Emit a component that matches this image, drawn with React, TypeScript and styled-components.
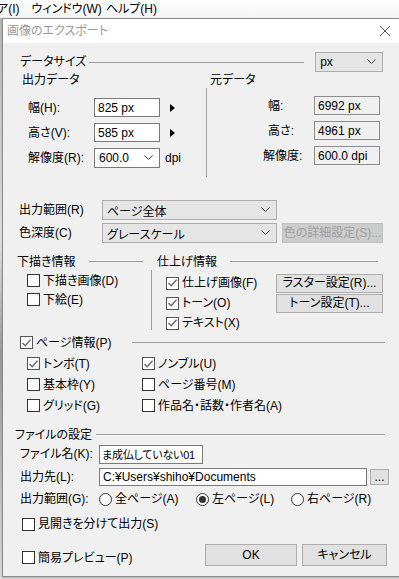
import React from 'react';
import styled, { createGlobalStyle } from 'styled-components';

const GlobalStyle = createGlobalStyle`
  html, body {
    margin: 0;
    padding: 0;
    background: #dcdcdc;
  }
  body {
    font-family: "Liberation Sans", "Noto Sans CJK JP", sans-serif;
    font-size: 12px;
    font-feature-settings: "palt";
    color: #000;
  }
`;

const Screen = styled.div`
  width: 399px;
  height: 579px;
  overflow: hidden;
  display: flex;
  flex-direction: column;
  background: #dcdcdc;
`;

const MenuStrip = styled.div`
  height: 18px;
  flex: none;
  display: flex;
  align-items: center;
  background: linear-gradient(#ffffff, #f4f4f4);
  white-space: nowrap;
`;

const MenuItem = styled.span<{ $x: number }>`
  margin-left: ${(p) => p.$x}px;
  line-height: 14px;
`;

const MainRow = styled.div`
  flex: 1;
  display: flex;
`;

const BackStrip = styled.div`
  width: 2px;
  flex: none;
  background: linear-gradient(#b9b9b9, #e3e3e3 40%, #9c9c9c 60%, #dddddd);
`;

const Dialog = styled.div`
  width: 400px;
  height: 557px;
  flex: none;
  border: 1px solid #8a8a8a;
  display: flex;
  flex-direction: column;
  box-shadow: 0 1px 2px rgba(0, 0, 0, 0.2);
`;

const TitleBar = styled.div`
  height: 24px;
  flex: none;
  background: #fff;
  display: flex;
  align-items: center;
  padding-left: 4px;
`;

const Title = styled.span`
  color: #9a9a9a;
  flex: 1;
  line-height: 14px;
`;

const CloseBox = styled.span`
  width: 12px;
  height: 12px;
  margin-right: 12px;
  display: flex;
`;

const Body = styled.div`
  flex: 1;
  background: #f0f0f0;
  padding-top: 9px;
  display: flex;
  flex-direction: column;
`;

const Row = styled.div<{ $h: number; $mt?: number; $ml?: number }>`
  height: ${(p) => p.$h}px;
  margin-top: ${(p) => p.$mt ?? 0}px;
  padding-left: ${(p) => p.$ml ?? 0}px;
  display: flex;
  align-items: center;
  flex: none;
  white-space: nowrap;
`;

const Text = styled.span<{ $w?: number; $ml?: number }>`
  line-height: 14px;
  ${(p) => (p.$w ? `width: ${p.$w}px; flex: none;` : '')}
  ${(p) => (p.$ml ? `margin-left: ${p.$ml}px;` : '')}
`;

const Rule = styled.div<{ $ml: number; $w?: number }>`
  margin-left: ${(p) => p.$ml}px;
  height: 0;
  border-top: 1px solid #a0a0a0;
  ${(p) => (p.$w ? `width: ${p.$w}px; flex: none;` : 'flex: 1;')}
`;

const TextBox = styled.div<{ $w: number; $h?: number; $ml?: number; $ro?: boolean; $tight?: boolean }>`
  width: ${(p) => p.$w}px;
  height: ${(p) => p.$h ?? 19}px;
  margin-left: ${(p) => p.$ml ?? 0}px;
  box-sizing: border-box;
  flex: none;
  border: 1px solid ${(p) => (p.$ro ? '#8c8c8c' : '#7a7a7a')};
  background: ${(p) => (p.$ro ? '#f0f0f0' : '#fff')};
  padding-left: ${(p) => (p.$tight ? 2 : 3)}px;
  font-size: ${(p) => (p.$tight ? 11 : 12)}px;
  letter-spacing: ${(p) => (p.$tight ? '-0.2px' : 'normal')};
  display: flex;
  align-items: center;
  overflow: hidden;
`;

const Select = styled.div<{ $w: number; $ml?: number; $edit?: boolean }>`
  width: ${(p) => p.$w}px;
  height: 20px;
  margin-left: ${(p) => p.$ml ?? 0}px;
  box-sizing: border-box;
  flex: none;
  border: 1px solid ${(p) => (p.$edit ? '#7a7a7a' : '#adadad')};
  background: ${(p) => (p.$edit ? '#fff' : '#e5e5e5')};
  padding: 0 6px 0 4px;
  display: flex;
  align-items: center;
  justify-content: space-between;
`;

const Button = styled.div<{ $w: number; $h?: number; $ml?: number; $disabled?: boolean }>`
  width: ${(p) => p.$w}px;
  height: ${(p) => p.$h ?? 19}px;
  margin-left: ${(p) => p.$ml ?? 0}px;
  box-sizing: border-box;
  flex: none;
  border: 1px solid ${(p) => (p.$disabled ? '#bfbfbf' : '#adadad')};
  background: ${(p) => (p.$disabled ? '#cccccc' : '#e1e1e1')};
  color: ${(p) => (p.$disabled ? '#a0a0a0' : '#000')};
  display: flex;
  align-items: center;
  justify-content: center;
  line-height: 14px;
`;

const Arrow = styled.span`
  margin-left: 10px;
  width: 0;
  height: 0;
  border-top: 4px solid transparent;
  border-bottom: 4px solid transparent;
  border-left: 5px solid #000;
`;

const Cols = styled.div`
  height: 86px;
  display: flex;
  flex: none;
`;

const LeftCol = styled.div`
  width: 178px;
  padding: 8px 0 0 25px;
  flex: none;
`;

const RightCol = styled.div`
  margin-top: 1px;
  height: 84px;
  border-left: 1px solid #a0a0a0;
  padding: 5px 0 0 61px;
`;

const Groups = styled.div`
  height: 80px;
  margin-top: 11px;
  display: flex;
  flex: none;
`;

const GroupCol = styled.div<{ $w?: number; $ml: number }>`
  margin-left: ${(p) => p.$ml}px;
  ${(p) => (p.$w ? `width: ${p.$w}px; flex: none;` : 'flex: 1;')}
  display: flex;
  flex-direction: column;
`;

const Etched = styled.div`
  margin-top: 1px;
  height: 57px;
  border-left: 1px solid #a0a0a0;
  padding: 3px 0 0 14px;
`;

const CheckGrid = styled.div`
  margin: 2px 0 0 24px;
  display: grid;
  grid-template-columns: 115px auto;
  grid-auto-rows: 21px;
  align-items: center;
  flex: none;
`;

const CheckItem = styled.label<{ $w?: number; $dy?: number }>`
  display: flex;
  align-items: center;
  gap: 3px;
  white-space: nowrap;
  ${(p) => (p.$w ? `width: ${p.$w}px; flex: none;` : '')}
  ${(p) => (p.$dy ? `margin-top: ${p.$dy}px;` : '')}
`;

const Box = styled.span<{ $on?: boolean }>`
  width: 13px;
  height: 13px;
  box-sizing: border-box;
  border: 1px solid ${(p) => (p.$on ? '#555' : '#333')};
  background: #fff;
  flex: none;
  display: flex;
  align-items: center;
  justify-content: center;
`;

const Radio = styled.span<{ $on?: boolean }>`
  width: 13px;
  height: 13px;
  box-sizing: border-box;
  border-radius: 50%;
  border: 1px solid #333;
  background: #fff;
  flex: none;
  display: flex;
  align-items: center;
  justify-content: center;
  &::after {
    content: '';
    width: 7px;
    height: 7px;
    border-radius: 50%;
    background: ${(p) => (p.$on ? '#333' : 'transparent')};
  }
`;

const RadioItem = styled.label<{ $w: number }>`
  width: ${(p) => p.$w}px;
  flex: none;
  display: flex;
  align-items: center;
  gap: 3px;
`;

const Chevron = () => (
  <svg width="9" height="6" viewBox="0 0 9 6">
    <polyline points="0.5,0.5 4.5,4.5 8.5,0.5" fill="none" stroke="#444" strokeWidth="1" />
  </svg>
);

const Check: React.FC<{ label: string; on?: boolean; w?: number; dy?: number }> = ({ label, on, w, dy }) => (
  <CheckItem $w={w} $dy={dy}>
    <Box $on={on}>
      {on && (
        <svg width="9" height="8" viewBox="0 0 9 8">
          <polyline points="0.5,4 3.2,6.8 8.5,0.8" fill="none" stroke="#666" strokeWidth="1.3" />
        </svg>
      )}
    </Box>
    <Text>{label}</Text>
  </CheckItem>
);

export default function App() {
  return (
    <Screen>
      <GlobalStyle />
      <MenuStrip>
        <MenuItem $x={-3}>ア(I)</MenuItem>
        <MenuItem $x={12}>ウィンドウ(W)</MenuItem>
        <MenuItem $x={4}>ヘルプ(H)</MenuItem>
      </MenuStrip>
      <MainRow>
        <BackStrip />
        <Dialog>
          <TitleBar>
            <Title>画像のエクスポート</Title>
            <CloseBox>
              <svg width="12" height="12" viewBox="0 0 12 12">
                <path d="M1 1 L11 11 M11 1 L1 11" stroke="#555" strokeWidth="1" />
              </svg>
            </CloseBox>
          </TitleBar>
          <Body>
            <Row $h={20} $ml={17}>
              <Text>データサイズ</Text>
              <Rule $ml={3} $w={215} />
              <Select $w={68} $ml={11}>
                <span>px</span>
                <Chevron />
              </Select>
            </Row>
            <Row $h={15} $ml={19}>
              <Text $w={188}>出力データ</Text>
              <Text>元データ</Text>
            </Row>
            <Cols>
              <LeftCol>
                <Row $h={25}>
                  <Text $w={66}>幅(H):</Text>
                  <TextBox $w={66}>825 px</TextBox>
                  <Arrow />
                </Row>
                <Row $h={25}>
                  <Text $w={66}>高さ(V):</Text>
                  <TextBox $w={66}>585 px</TextBox>
                  <Arrow />
                </Row>
                <Row $h={25}>
                  <Text $w={66}>解像度(R):</Text>
                  <Select $w={66} $edit>
                    <span>600.0</span>
                    <Chevron />
                  </Select>
                  <Text $ml={5}>dpi</Text>
                </Row>
              </LeftCol>
              <RightCol>
                <Row $h={25}>
                  <Text $w={46}>幅:</Text>
                  <TextBox $w={66} $ro>6992 px</TextBox>
                </Row>
                <Row $h={25}>
                  <Text $w={46}>高さ:</Text>
                  <TextBox $w={66} $ro>4961 px</TextBox>
                </Row>
                <Row $h={25}>
                  <Text $w={51} $ml={-5}>解像度:</Text>
                  <TextBox $w={66} $ro>600.0 dpi</TextBox>
                </Row>
              </RightCol>
            </Cols>
            <Row $h={20} $mt={27} $ml={16}>
              <Text $w={83}>出力範囲(R)</Text>
              <Select $w={175}>
                <span>ページ全体</span>
                <Chevron />
              </Select>
            </Row>
            <Row $h={20} $mt={3} $ml={16}>
              <Text $w={83}>色深度(C)</Text>
              <Select $w={175}>
                <span>グレースケール</span>
                <Chevron />
              </Select>
              <Button $w={101} $h={20} $ml={5} $disabled>色の詳細設定(S)...</Button>
            </Row>
            <Groups>
              <GroupCol $w={134} $ml={14}>
                <Row $h={15}>
                  <Text>下描き情報</Text>
                  <Rule $ml={13} $w={54} />
                </Row>
                <Row $h={19} $mt={2} $ml={10}>
                  <Check label="下描き画像(D)" />
                </Row>
                <Row $h={19} $ml={10}>
                  <Check label="下絵(E)" />
                </Row>
              </GroupCol>
              <GroupCol $ml={0}>
                <Row $h={15} $ml={6}>
                  <Text>仕上げ情報</Text>
                  <Rule $ml={13} $w={148} />
                </Row>
                <Etched>
                  <Row $h={20}>
                    <Check label="仕上げ画像(F)" on w={110} />
                    <Button $w={107}>ラスター設定(R)...</Button>
                  </Row>
                  <Row $h={20}>
                    <Check label="トーン(O)" on w={110} />
                    <Button $w={107}>トーン設定(T)...</Button>
                  </Row>
                  <Row $h={20}>
                    <Check label="テキスト(X)" on />
                  </Row>
                </Etched>
              </GroupCol>
            </Groups>
            <Row $h={17} $ml={17}>
              <Check label="ページ情報(P)" on />
              <Rule $ml={20} $w={253} />
            </Row>
            <CheckGrid>
              <Check label="トンボ(T)" on />
              <Check label="ノンブル(U)" on />
              <Check label="基本枠(Y)" />
              <Check label="ページ番号(M)" />
              <Check label="グリッド(G)" />
              <Check label="作品名・話数・作者名(A)" />
            </CheckGrid>
            <Row $h={15} $mt={11} $ml={12}>
              <Text>ファイルの設定</Text>
              <Rule $ml={4} $w={289} />
            </Row>
            <Row $h={20} $mt={2} $ml={17}>
              <Text $w={79}>ファイル名(K):</Text>
              <TextBox $w={104} $tight>ま成仏していない01</TextBox>
            </Row>
            <Row $h={20} $mt={3} $ml={17}>
              <Text $w={79}>出力先(L):</Text>
              <TextBox $w={268} $h={18}>C:¥Users¥shiho¥Documents</TextBox>
              <Button $w={19} $h={16} $ml={3}>...</Button>
            </Row>
            <Row $h={20} $mt={2} $ml={17}>
              <Text $w={79}>出力範囲(G):</Text>
              <RadioItem $w={97}>
                <Radio />
                <Text>全ページ(A)</Text>
              </RadioItem>
              <RadioItem $w={95}>
                <Radio $on />
                <Text>左ページ(L)</Text>
              </RadioItem>
              <RadioItem $w={100}>
                <Radio />
                <Text>右ページ(R)</Text>
              </RadioItem>
            </Row>
            <Row $h={20} $mt={5} $ml={19}>
              <Check label="見開きを分けて出力(S)" />
            </Row>
            <Row $h={22} $mt={10} $ml={19}>
              <CheckItem $w={183} $dy={5}>
                <Box />
                <Text>簡易プレビュー(P)</Text>
              </CheckItem>
              <Button $w={92} $h={22}>OK</Button>
              <Button $w={85} $h={22} $ml={5}>キャンセル</Button>
            </Row>
          </Body>
        </Dialog>
      </MainRow>
    </Screen>
  );
}
